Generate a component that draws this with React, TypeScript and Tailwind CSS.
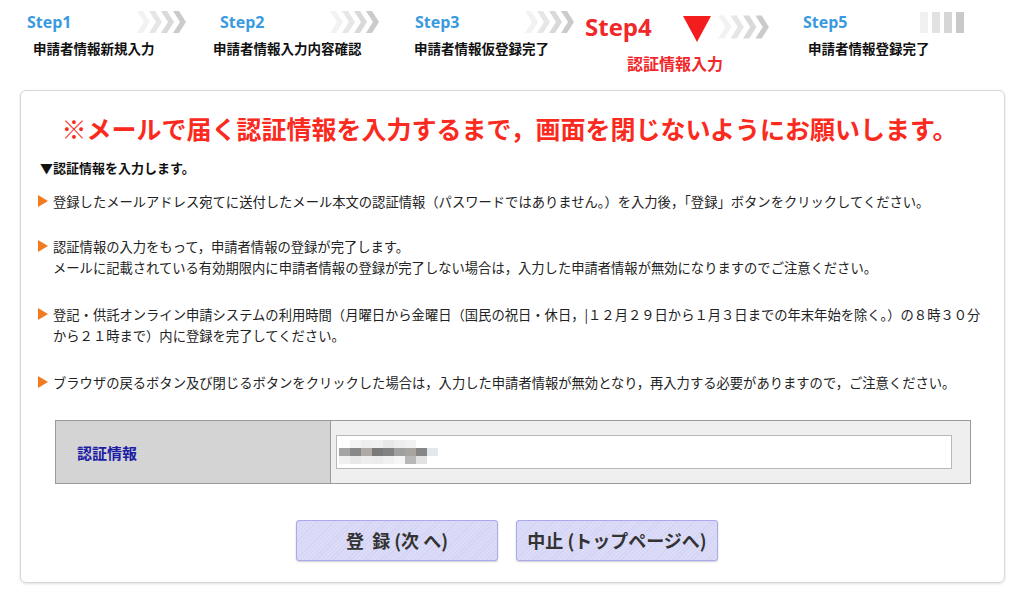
import React from 'react';

const jp = "font-['Noto_Sans_CJK_JP','Noto_Sans',sans-serif]";
const latin = "font-['Open_Sans','Noto_Sans_CJK_JP',sans-serif]";

// four fading chevrons used between steps
const Chevrons = ({ w = 50, h = 22 }: { w?: number; h?: number }) => {
  const colors = ['#f2f2f2', '#e6e6e6', '#d9d9d9', '#cbcbcb'];
  return (
    <svg width={w} height={h} viewBox="0 0 50 22">
      {colors.map((c, i) => {
        const x = i * 12;
        return (
          <polygon
            key={i}
            points={`${x},0 ${x + 6},0 ${x + 13},11 ${x + 6},22 ${x},22 ${x + 7},11`}
            fill={c}
          />
        );
      })}
    </svg>
  );
};

const Bars = () => (
  <svg width="44" height="21" viewBox="0 0 44 21">
    {['#f0f0f0', '#e2e2e2', '#d6d6d6', '#c9c9c9'].map((c, i) => (
      <rect key={i} x={i * 12} y={0} width={8} height={21} fill={c} />
    ))}
  </svg>
);

const Bullet = () => (
  <svg width="10" height="12" viewBox="0 0 10 12" className="mt-[4px] shrink-0">
    <polygon points="0,0 10,6 0,12" fill="#f47a1f" />
  </svg>
);

// pixelated, blurred placeholder of the typed value
const Blurred = () => {
  const rows = [
    ['#fff', '#f4f4f4', '#eeeeee', '#f0f0f0', '#e8e8e8', '#eeeeee', '#f2f2f2', '#fff', '#fff'],
    ['#a4a4a4', '#888888', '#b0aaa6', '#7a7a7a', '#828282', '#a0a0a0', '#a8a4a0', '#868686', '#e4e8ec'],
    ['#f0f0f0', '#e8e8e8', '#eeeeee', '#ececec', '#f0f0f0', '#f6f6f6', '#b8b8b8', '#e2e2e2', '#fff'],
  ];
  return (
    <svg width="99" height="24" viewBox="0 0 99 24">
      {rows.map((r, ri) =>
        r.map((c, ci) => <rect key={`${ri}-${ci}`} x={ci * 11} y={ri * 8} width={11} height={8} fill={c} />)
      )}
    </svg>
  );
};

const btn =
  'w-[202px] h-[41px] rounded-[3px] border border-[#a9a9ec] bg-[#d9d9f7] bg-[repeating-linear-gradient(135deg,#dcdcf8_0px,#dcdcf8_2px,#d3d3f4_2px,#d3d3f4_3px)] shadow-[0_1px_2px_rgba(0,0,0,0.2)] text-[18px] font-bold text-[#333]';

const App: React.FC = () => {
  return (
    <div className={`w-[1024px] h-[606px] bg-white overflow-hidden ${jp}`}>
      {/* step header */}
      <div className="flex items-start h-[90px] pt-[8px] pl-[27px]">
        <div className="w-[193px] shrink-0">
          <div className="flex items-center h-[28px]">
            <span className={`w-[110px] text-[16px] font-bold text-[#3a9ae0] ${latin}`}>Step1</span>
            <Chevrons />
          </div>
          <div className="mt-[3px] ml-[6px] text-[13.5px] leading-[18px] font-bold text-[#111]">申請者情報新規入力</div>
        </div>
        <div className="w-[195px] shrink-0">
          <div className="flex items-center h-[28px]">
            <span className={`w-[110px] text-[16px] font-bold text-[#3a9ae0] ${latin}`}>Step2</span>
            <Chevrons />
          </div>
          <div className="mt-[3px] ml-[-7px] text-[13.5px] leading-[18px] font-bold text-[#111]">申請者情報入力内容確認</div>
        </div>
        <div className="w-[170px] shrink-0">
          <div className="flex items-center h-[28px]">
            <span className={`w-[110px] text-[16px] font-bold text-[#3a9ae0] ${latin}`}>Step3</span>
            <Chevrons />
          </div>
          <div className="mt-[3px] ml-[-1px] text-[13.5px] leading-[18px] font-bold text-[#111]">申請者情報仮登録完了</div>
        </div>
        <div className="w-[218px] shrink-0">
          <div className="flex items-center h-[38px]">
            <span className={`w-[98px] text-[24px] font-bold text-[#f0282a] ${latin}`}>Step4</span>
            <svg width="28" height="26" viewBox="0 0 28 26" className="mt-[4px]">
              <polygon points="0,0 28,0 14,26" fill="#f41d1d" />
            </svg>
            <span className="ml-[7px]">
              <Chevrons w={52} h={30} />
            </span>
          </div>
          <div className="mt-[6px] ml-[42px] text-[16px] leading-[22px] font-bold text-[#f0282a]">認証情報入力</div>
        </div>
        <div className="shrink-0">
          <div className="flex items-center h-[28px]">
            <span className={`w-[117px] text-[16px] font-bold text-[#3a9ae0] ${latin}`}>Step5</span>
            <Bars />
          </div>
          <div className="mt-[3px] ml-[5px] text-[13.5px] leading-[18px] font-bold text-[#111]">申請者情報登録完了</div>
        </div>
      </div>

      {/* main panel */}
      <div className="ml-[20px] w-[985px] border border-[#d6d6d6] rounded-[6px] shadow-[0_1px_3px_rgba(0,0,0,0.12)] pt-[21px] pb-[21px]">
        <h1 className="text-center pr-[6px] text-[25px] leading-[32px] font-bold text-[#fa2a1e]">
          ※メールで届く認証情報を入力するまで，画面を閉じないようにお願いします。
        </h1>

        <div className="pl-[17px] pr-[4px] text-[13.3px] leading-[21px] text-[#222]">
          <div className="mt-[14px] ml-[2px] text-[13px] leading-[20px] font-bold text-[#111]">▼認証情報を入力します。</div>

          <div className="mt-[13px] flex gap-[5px]">
            <Bullet />
            <p>登録したメールアドレス宛てに送付したメール本文の認証情報（パスワードではありません。）を入力後，「登録」ボタンをクリックしてください。</p>
          </div>

          <div className="mt-[24px] flex gap-[5px]">
            <Bullet />
            <p>
              認証情報の入力をもって，申請者情報の登録が完了します。
              <br />
              メールに記載されている有効期限内に申請者情報の登録が完了しない場合は，入力した申請者情報が無効になりますのでご注意ください。
            </p>
          </div>

          <div className="mt-[26px] flex gap-[5px]">
            <Bullet />
            <p className="whitespace-nowrap">
              登記・供託オンライン申請システムの利用時間（月曜日から金曜日（国民の祝日・休日，|１２月２９日から１月３日までの年末年始を除く。）の８時３０分
              <br />
              から２１時まで）内に登録を完了してください。
            </p>
          </div>

          <div className="mt-[26px] flex gap-[5px]">
            <Bullet />
            <p>ブラウザの戻るボタン及び閉じるボタンをクリックした場合は，入力した申請者情報が無効となり，再入力する必要がありますので，ご注意ください。</p>
          </div>

          {/* auth input table */}
          <div className="mt-[27px] ml-[17px] w-[916px] h-[64px] flex border border-[#9a9a9a]">
            <div className="w-[275px] shrink-0 bg-[#d4d4d4] border-r border-[#9a9a9a] flex items-center pl-[21px] text-[15px] font-bold text-[#1c1ca6]">
              認証情報
            </div>
            <div className="flex-1 bg-[#efefef] flex items-center pl-[5px]">
              <div className="w-[616px] h-[34px] bg-white border border-[#b8b8b8] flex items-center pl-[2px]">
                <Blurred />
              </div>
            </div>
          </div>
        </div>

        {/* buttons */}
        <div className="mt-[36px] flex justify-center gap-[18px] pr-[11px]">
          <button className={btn}>登&nbsp;&nbsp;録 (次 へ)</button>
          <button className={btn}>中止 (トップページへ)</button>
        </div>
      </div>
    </div>
  );
};

export default App;
